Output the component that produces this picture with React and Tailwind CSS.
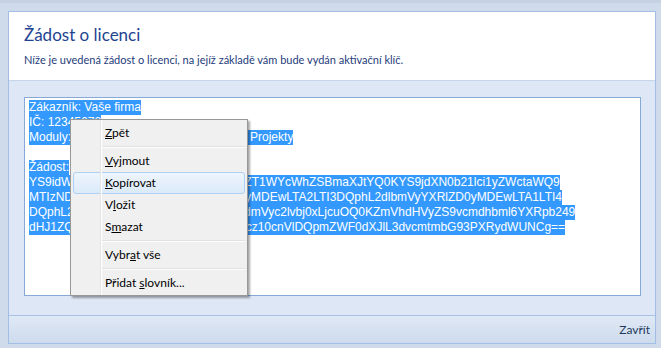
import React from 'react'

const uiFont = { fontFamily: '"Segoe UI", Lato, sans-serif' }

const MenuItem = ({ children, active }) => (
    <div
        className={`h-[22px] flex items-center pl-[31px] mx-[2px] rounded-[3px] border ${
            active
                ? 'border-[#aed0f2] bg-gradient-to-b from-[#eef5fd] to-[#dbeaf9]'
                : 'border-transparent'
        }`}
    >
        <span className="relative z-10">{children}</span>
    </div>
)

const Separator = () => (
    <div className="h-[6px] ml-[31px] mr-[2px] flex flex-col justify-center">
        <div className="h-px bg-[#e0e0e0]" />
        <div className="h-px bg-white" />
    </div>
)

const SelLine = ({ left, hidden, gap, right }) => (
    <div className="flex w-fit bg-[#3399ff] text-white whitespace-nowrap">
        <span>{left}</span>
        {gap ? (
            <span className="overflow-hidden" style={{ width: gap }}>
                {hidden}
            </span>
        ) : null}
        {right ? <span>{right}</span> : null}
    </div>
)

export default function App() {
    return (
        <div className="relative w-[661px] h-[348px] overflow-hidden bg-[#cfdbea] border-t-[3px] border-[#c5d2e3] pt-[8px] pl-[8px] pr-[5px] pb-[4px]" style={uiFont}>
            <div className="h-full flex flex-col border border-[#a3bee6]">
                {/* Header */}
                <div className="h-[69px] bg-white border-b border-[#c6d5ea] px-[15px] pt-[11px]">
                    <h1 className="text-[17px] leading-[24px] text-[#1e4491]">Žádost o licenci</h1>
                    <p className="mt-[6px] text-[11px] leading-[14px] text-[#1e3c7a]">
                        Níže je uvedená žádost o licenci, na jejíž základě vám bude vydán aktivační klíč.
                    </p>
                </div>

                {/* Body */}
                <div className="flex-1 bg-[#dde7f5] pt-[16px] pb-[19px] pl-[15px] pr-[14px]">
                    <div
                        className="h-full bg-white border border-[#86a9d8] pl-[4px] pt-[2px] text-[12px] leading-[15px]"
                        style={{ fontFamily: '"Liberation Sans", Arial, sans-serif' }}
                    >
                        <SelLine left="Zákazník: Vaše firma" />
                        <SelLine left="IČ: 12345678" />
                        <SelLine left="Moduly: " hidden="Organizace, Workflow, Kontakty," gap={179} right="Projekty" />
                        <div className="h-[15px]" />
                        <SelLine left="Žádost:" />
                        <SelLine left="YS9idW" hidden="5kbGUtbmFtZT1WYcWhZSBmaXJtYQ0KYS9idXNpbmVzcy1uYW1" gap={172} right="ZT1WYcWhZSBmaXJtYQ0KYS9jdXN0b21lci1yZWctaWQ9" />
                        <SelLine left="MTIzND" hidden="U2NzgNCmEvc3VwcG9ydC1leHBpcmF0aW9uLWRhdGU9" gap={172} right="yMDEwLTA2LTI3DQphL2dlbmVyYXRlZD0yMDEwLTA1LTI4" />
                        <SelLine left="DQphL" hidden="2FwcGxpY2F0aW9uLXZlcnNpb249MS43LjkNCmEv" gap={177} right="dmVyc2lvbj0xLjcuOQ0KZmVhdHVyZS9vcmdhbml6YXRpb249" />
                        <SelLine left="dHJ1ZQ" hidden="0KZmVhdHVyZS9wcm9qZWN0cz10cnVlDQpmZWF0dXJlL3Byb2plY3Rz" gap={172} right="cz10cnVlDQpmZWF0dXJlL3dvcmtmbG93PXRydWUNCg==" />
                    </div>
                </div>

                {/* Footer */}
                <div className="h-[28px] border-t border-[#a9c3e6] bg-gradient-to-b from-[#e0e9f6] to-[#cddbed] flex items-center justify-end pr-[5px]">
                    <span className="text-[12px] text-[#1e395b]">Zavřít</span>
                </div>
            </div>

            {/* Context menu */}
            <div className="absolute left-[70px] top-[116px] w-[178px] bg-[#f0f0f0] border border-[#979797] pt-[2px] pb-px text-[12px] text-black shadow-[2px_2px_2px_rgba(0,0,0,0.35)]">
                <div className="absolute left-[29px] top-0 bottom-0 w-[2px] flex">
                    <div className="w-px bg-[#e2e3e3]" />
                    <div className="w-px bg-white" />
                </div>
                <MenuItem><u>Z</u>pět</MenuItem>
                <Separator />
                <MenuItem><u>V</u>yjmout</MenuItem>
                <MenuItem active><u>K</u>opírovat</MenuItem>
                <MenuItem>V<u>l</u>ožit</MenuItem>
                <MenuItem>S<u>m</u>azat</MenuItem>
                <Separator />
                <MenuItem>Vybr<u>a</u>t vše</MenuItem>
                <Separator />
                <MenuItem>Přidat <u>s</u>lovník...</MenuItem>
            </div>
        </div>
    )
}
